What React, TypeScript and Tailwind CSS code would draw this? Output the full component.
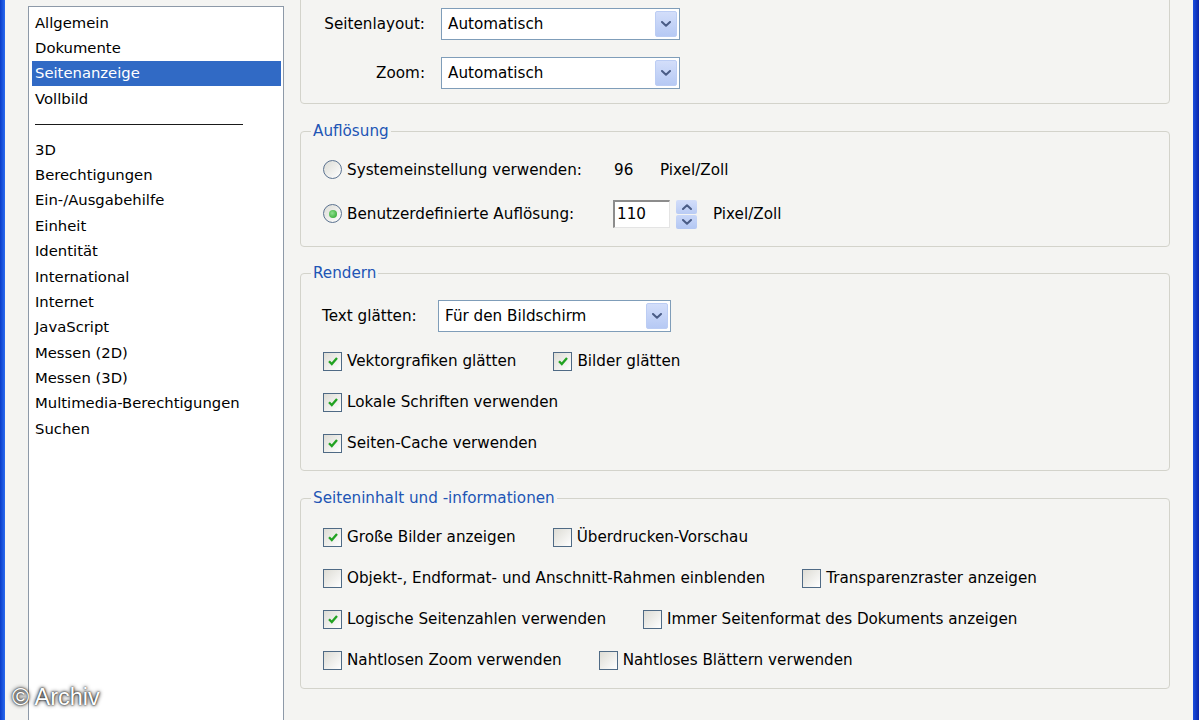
import React from 'react'

const LIST_TOP = ['Allgemein', 'Dokumente', 'Seitenanzeige', 'Vollbild']
const LIST_BOTTOM = [
  '3D',
  'Berechtigungen',
  'Ein-/Ausgabehilfe',
  'Einheit',
  'Identität',
  'International',
  'Internet',
  'JavaScript',
  'Messen (2D)',
  'Messen (3D)',
  'Multimedia-Berechtigungen',
  'Suchen',
]

function Chevron({ up = false }: { up?: boolean }) {
  return (
    <svg viewBox="0 0 10 6" className="w-[10px] h-[6px]">
      <path
        d={up ? 'M1 5 L5 1.2 L9 5' : 'M1 1 L5 4.8 L9 1'}
        stroke="#4a5c86"
        strokeWidth="2"
        fill="none"
        strokeLinecap="round"
        strokeLinejoin="round"
      />
    </svg>
  )
}

function Select({ value, className }: { value: string; className: string }) {
  return (
    <div className={`h-[32px] border border-[#7f9db9] bg-white flex items-center p-[2px] ${className}`}>
      <span className="flex-1 pl-[4px] pt-px">{value}</span>
      <span className="w-[22px] h-full rounded-[2px] border border-[#bccdf4] bg-linear-to-b from-[#d3defa] to-[#b6c9f4] flex items-center justify-center">
        <Chevron />
      </span>
    </div>
  )
}

function Check({ checked = false, label }: { checked?: boolean; label: string }) {
  return (
    <div className="h-[24px] flex items-center gap-[5px] shrink-0">
      <span className="w-[19px] h-[19px] border border-[#4f6a85] bg-linear-to-br from-[#dddcd5] to-white flex items-center justify-center">
        {checked && (
          <svg viewBox="0 0 12 12" className="w-[12px] h-[12px]">
            <path d="M2 6.2 L4.8 9 L10 3" stroke="#22a322" strokeWidth="2.3" fill="none" />
          </svg>
        )}
      </span>
      <span className="pt-px">{label}</span>
    </div>
  )
}

function Radio({ checked = false, label }: { checked?: boolean; label: string }) {
  return (
    <div className="flex items-center gap-[5px]">
      <span className="w-[19px] h-[19px] rounded-full border border-[#5b7290] bg-linear-to-br from-[#dcdcd6] to-white flex items-center justify-center">
        {checked && <span className="w-[8px] h-[8px] rounded-full bg-[radial-gradient(circle_at_40%_40%,#8fe08f,#22a022)]" />}
      </span>
      <span className="pt-px">{label}</span>
    </div>
  )
}

function Group({ title, className, children }: { title: string; className: string; children: React.ReactNode }) {
  return (
    <fieldset className={`border border-[#d3d3cb] rounded-[4px] ${className}`}>
      <legend className="ml-[10px] px-[2px] leading-[20px] text-[#2155b5]">{title}</legend>
      {children}
    </fieldset>
  )
}

export default function App() {
  return (
    <div className="relative h-[720px] w-[1199px] overflow-hidden bg-[#f4f4f2] flex items-start font-['DejaVu_Sans',sans-serif] text-[15.2px] text-black">
      <div className="w-[5px] h-full shrink-0 bg-linear-to-r from-[#0a3bc9] to-[#2a6af0]" />

      {/* category list */}
      <div className="ml-[23px] mt-[6px] w-[256px] h-[730px] shrink-0 border border-[#8d99a8] bg-white pt-[3px] pl-[3px] pr-[2px] text-[14.8px]">
        {LIST_TOP.map((item) => (
          <div
            key={item}
            className={`h-[25.4px] flex items-center pl-[3px] ${
              item === 'Seitenanzeige' ? 'bg-[#316ac5] text-white' : ''
            }`}
          >
            {item}
          </div>
        ))}
        <div className="h-[25.4px] flex items-center">
          <div className="ml-[3px] w-[208px] h-px bg-[#1a1a1a]" />
        </div>
        {LIST_BOTTOM.map((item) => (
          <div key={item} className="h-[25.4px] flex items-center pl-[3px]">
            {item}
          </div>
        ))}
      </div>

      {/* settings */}
      <div className="ml-[16px] w-[870px] shrink-0 flex flex-col">
        <div className="-mt-[20px] pt-[27px] pb-[14px] border border-[#d3d3cb] rounded-[4px] flex flex-col gap-[17px]">
          <div className="flex items-center">
            <span className="w-[124px] text-right">Seitenlayout:</span>
            <Select value="Automatisch" className="ml-[16px] w-[239px]" />
          </div>
          <div className="flex items-center">
            <span className="w-[124px] text-right">Zoom:</span>
            <Select value="Automatisch" className="ml-[16px] w-[239px]" />
          </div>
        </div>

        <Group title="Auflösung" className="mt-[17px]">
          <div className="pl-[22px] pt-[15px] pb-[18px] flex flex-col gap-[16px]">
            <div className="h-[28px] flex items-center">
              <div className="w-[290px]">
                <Radio label="Systemeinstellung verwenden:" />
              </div>
              <span className="w-[47px] pl-[1px] pt-px">96</span>
              <span className="pt-px">Pixel/Zoll</span>
            </div>
            <div className="h-[28px] flex items-center">
              <div className="w-[290px]">
                <Radio checked label="Benutzerdefinierte Auflösung:" />
              </div>
              <div className="w-[57px] h-[28px] bg-white border-t-2 border-l-2 border-t-[#8c8c8c] border-l-[#8c8c8c] border-r border-b border-r-[#e4e4e4] border-b-[#e4e4e4] flex items-center pl-[2px]">
                110
              </div>
              <div className="ml-[6px] w-[21px] h-[29px] flex flex-col gap-px">
                <span className="flex-1 rounded-[2px] bg-linear-to-b from-[#d3defa] to-[#b9cbf4] flex items-center justify-center">
                  <Chevron up />
                </span>
                <span className="flex-1 rounded-[2px] bg-linear-to-b from-[#c9d7f8] to-[#b3c7f3] flex items-center justify-center">
                  <Chevron />
                </span>
              </div>
              <span className="ml-[16px] pt-px">Pixel/Zoll</span>
            </div>
          </div>
        </Group>

        <Group title="Rendern" className="mt-[16px]">
          <div className="pl-[22px] pt-[17px] pb-[15px] flex flex-col gap-[17px]">
            <div className="flex items-center">
              <span className="w-[116px] -ml-px pt-px">Text glätten:</span>
              <Select value="Für den Bildschirm" className="w-[233px]" />
            </div>
            <div className="flex gap-[37px]">
              <Check checked label="Vektorgrafiken glätten" />
              <Check checked label="Bilder glätten" />
            </div>
            <Check checked label="Lokale Schriften verwenden" />
            <Check checked label="Seiten-Cache verwenden" />
          </div>
        </Group>

        <Group title="Seiteninhalt und -informationen" className="mt-[17px]">
          <div className="pl-[22px] pt-[17px] pb-[16px] flex flex-col gap-[17px]">
            <div className="flex gap-[37px]">
              <Check checked label="Große Bilder anzeigen" />
              <Check label="Überdrucken-Vorschau" />
            </div>
            <div className="flex gap-[37px]">
              <Check label="Objekt-, Endformat- und Anschnitt-Rahmen einblenden" />
              <Check label="Transparenzraster anzeigen" />
            </div>
            <div className="flex gap-[37px]">
              <Check checked label="Logische Seitenzahlen verwenden" />
              <Check label="Immer Seitenformat des Dokuments anzeigen" />
            </div>
            <div className="flex gap-[37px]">
              <Check label="Nahtlosen Zoom verwenden" />
              <Check label="Nahtloses Blättern verwenden" />
            </div>
          </div>
        </Group>
      </div>

      <div className="flex-1" />
      <div className="w-[6px] h-full shrink-0 bg-linear-to-r from-[#1a4fe0] to-[#0a24a8]" />

      <div className="absolute left-[12px] top-[684px] font-['Liberation_Sans',sans-serif] text-[23.5px] leading-[26px] text-white [text-shadow:0_0_4px_#000,0_0_2px_#000]">
        © Archiv
      </div>
    </div>
  )
}
